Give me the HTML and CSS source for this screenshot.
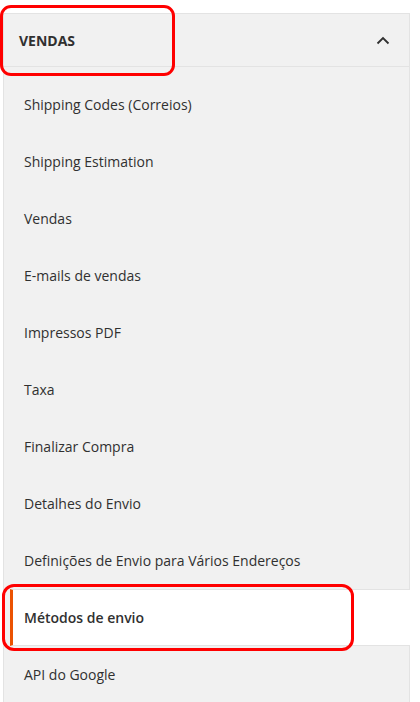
FILE: index.html
```html
<!DOCTYPE html>
<html lang="pt">
<head>
<meta charset="utf-8">
<title>Vendas</title>
<link rel="stylesheet" href="styles.css">
</head>
<body>
<div class="nav">
  <div class="nav-title">
    <strong>Vendas</strong>
    <svg class="chev" width="14" height="9" viewBox="0 0 14 9"><polyline points="1.5,7.5 7,2 12.5,7.5" fill="none" stroke="#303030" stroke-width="1.8"/></svg>
  </div>
  <ul class="nav-items">
    <li class="item">Shipping Codes (Correios)</li>
    <li class="item">Shipping Estimation</li>
    <li class="item">Vendas</li>
    <li class="item">E-mails de vendas</li>
    <li class="item">Impressos PDF</li>
    <li class="item">Taxa</li>
    <li class="item">Finalizar Compra</li>
    <li class="item">Detalhes do Envio</li>
    <li class="item">Definições de Envio para Vários Endereços</li>
    <li class="item active">Métodos de envio</li>
    <li class="item">API do Google</li>
  </ul>
</div>
<div class="mark mark-title"></div>
<div class="mark mark-item"></div>
</body>
</html>
```

FILE: styles.css
```css
html, body {
  margin: 0;
  padding: 0;
  background: #ffffff;
  font-family: "Open Sans", "Noto Sans", sans-serif;
  color: #303030;
  overflow: hidden;
}

.nav {
  margin: 13px 0 0 3px;
  width: 407px;
  box-sizing: border-box;
  border: 1px solid #e3e3e3;
  border-bottom: none;
  background: #f1f1f1;
}

.nav-title {
  height: 52px;
  border-bottom: 1px solid #e3e3e3;
  display: flex;
  align-items: center;
  justify-content: space-between;
  padding: 0 19px 0 15px;
}

.nav-title strong {
  font-size: 14px;
  font-weight: 700;
  text-transform: uppercase;
  letter-spacing: 0;
}

.chev {
  display: block;
}

.nav-items {
  list-style: none;
  margin: 0;
  padding: 9px 0 0;
}

.item {
  height: 57px;
  box-sizing: border-box;
  margin-left: 6px;
  border-left: 3px solid transparent;
  border-top: 1px solid transparent;
  border-bottom: 1px solid transparent;
  padding-left: 11px;
  display: flex;
  align-items: center;
  font-size: 14px;
}

.item.active {
  background: #ffffff;
  border-left-color: #eb5202;
  border-top-color: #e3e3e3;
  border-bottom-color: #e3e3e3;
  margin-right: -1px;
  font-weight: 600;
}

.mark {
  position: absolute;
  border: 3px solid #ff0000;
  box-sizing: border-box;
}

.mark-title {
  left: 0;
  top: 5px;
  width: 175px;
  height: 71px;
  border-radius: 11px;
}

.mark-item {
  left: 2px;
  top: 584px;
  width: 352px;
  height: 67px;
  border-radius: 12px;
}
```
